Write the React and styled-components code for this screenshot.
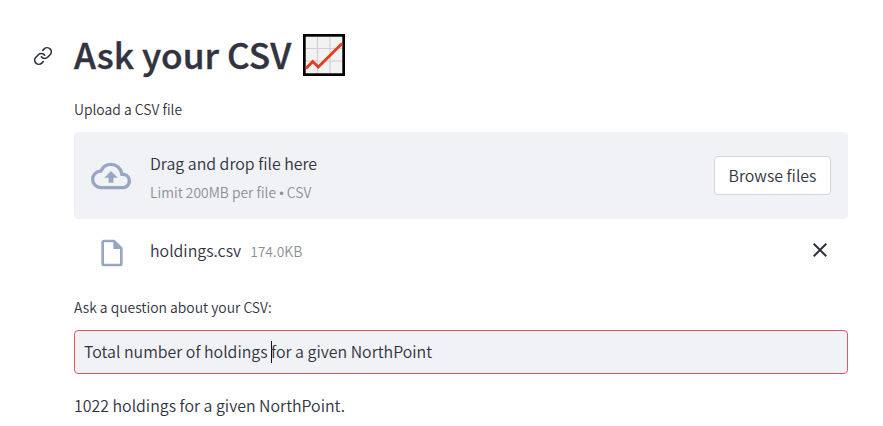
import React from "react";
import styled, { createGlobalStyle } from "styled-components";

const GlobalStyle = createGlobalStyle`
  * { box-sizing: border-box; }
  body {
    margin: 0;
    background: #ffffff;
    color: #31333f;
    font-family: "Source Sans Pro", "Noto Sans CJK SC", sans-serif;
    font-size: 15.92px;
    font-weight: 350;
  }
`;

const Page = styled.main`
  width: 848px;
  height: 426px;
  padding: 28px 0 0 33px;
  overflow: hidden;
`;

const Heading = styled.header`
  display: flex;
  align-items: center;
  height: 56px;
`;

const AnchorLink = styled.a`
  display: flex;
  width: 41px;
  color: #31333f;
`;

const Title = styled.h1`
  display: flex;
  align-items: flex-start;
  gap: 12px;
  height: 56px;
  margin: 0;
  font-size: 35.3px;
  font-weight: 500;
  line-height: 51px;
  white-space: nowrap;
  -webkit-text-stroke: 0.4px currentColor;

  svg {
    margin-top: 6px;
  }
`;

const Content = styled.div`
  margin-left: 41px;
`;

const Label = styled.label`
  display: block;
  height: 22px;
  margin-top: ${(p) => p.$top}px;
  font-size: 13.9px;
  line-height: 22px;
`;

const Dropzone = styled.section`
  display: flex;
  align-items: center;
  height: 87px;
  margin-top: 12px;
  padding: 0 17px;
  border-radius: 4px;
  background: #f0f2f6;
`;

const IconSlot = styled.span`
  display: flex;
  flex: none;
  justify-content: center;
  width: ${(p) => p.$width}px;
  padding-top: ${(p) => p.$drop || 1}px;
  color: #97a6c3;
`;

const Instructions = styled.div`
  flex: 1;
  margin-left: 19px;
  padding-top: 6px;
`;

const Line = styled.div`
  line-height: 28px;
`;

const Hint = styled.small`
  display: block;
  margin-top: 1px;
  font-size: 13.86px;
  line-height: 26px;
  color: #8d8f98;
`;

const Bullet = styled.span`
  font-family: "Liberation Sans", sans-serif;
  font-size: 13px;
`;

const BrowseButton = styled.button`
  width: 117px;
  height: 39px;
  padding: 0;
  border: 1px solid #d6d6da;
  border-radius: 4px;
  background: #ffffff;
  color: inherit;
  font: inherit;
  line-height: 37px;
`;

const FileRow = styled.div`
  display: flex;
  align-items: center;
  height: 32px;
  margin-top: 16px;
  padding: 0 16px 0 22px;
`;

const FileName = styled.span`
  margin-left: 22px;
  line-height: 28px;
`;

const FileSize = styled.span`
  flex: 1;
  margin-left: 9px;
  font-size: 13.86px;
  line-height: 28px;
  color: #8d8f98;
`;

const RemoveButton = styled.button`
  display: flex;
  margin-top: -2px;
  padding: 0;
  border: 0;
  background: none;
  color: #31333f;
`;

const Field = styled.div`
  height: 44px;
  margin-top: 12px;
  padding-left: 9px;
  border: 1px solid #e05a62;
  border-radius: 4px;
  background: #f0f2f6;
  line-height: 42px;
  white-space: pre;
`;

const Caret = styled.span`
  display: inline-block;
  width: 1px;
  height: 22px;
  margin-right: -1px;
  vertical-align: -5px;
  background: #111111;
`;

const Answer = styled.p`
  margin: 18px 0 0;
  line-height: 28px;
`;

const LinkIcon = () => (
  <svg width="20" height="20" viewBox="0 0 24 24" fill="none" stroke="currentColor" strokeWidth="2" strokeLinecap="round" strokeLinejoin="round">
    <path d="M10 13a5 5 0 0 0 7.54.54l3-3a5 5 0 0 0-7.07-7.07l-1.72 1.71" />
    <path d="M14 11a5 5 0 0 0-7.54-.54l-3 3a5 5 0 0 0 7.07 7.07l1.71-1.71" />
  </svg>
);

const ChartIcon = () => (
  <svg width="42" height="42" viewBox="0 0 42 42">
    <rect width="42" height="42" fill="#000" />
    <rect x="2.7" y="2.7" width="36.6" height="36.6" fill="#f2f2f2" />
    <path d="M14.5 3v36M27 3v36M3 14.5h36M3 27h36" stroke="#cfcfcf" strokeWidth="1.2" />
    <path d="M3 34.5 9.7 27.5 15.3 33 39 9.5" fill="none" stroke="#e43d1c" strokeWidth="2.8" />
  </svg>
);

const CloudIcon = () => (
  <svg width="40" height="40" viewBox="0 0 24 24" fill="currentColor">
    <path d="M19.35 10.04A7.49 7.49 0 0 0 12 4C9.11 4 6.6 5.64 5.35 8.04A5.994 5.994 0 0 0 0 14c0 3.31 2.69 6 6 6h13c2.76 0 5-2.24 5-5 0-2.64-2.05-4.78-4.65-4.96zM19 18H6c-2.21 0-4-1.79-4-4 0-2.05 1.53-3.76 3.56-3.97l1.07-.11.5-.95A5.469 5.469 0 0 1 12 6c2.62 0 4.88 1.86 5.39 4.43l.3 1.5 1.53.11A2.98 2.98 0 0 1 22 15c0 1.65-1.35 3-3 3zM8 13h2.55v3h2.9v-3H16l-4-4z" />
  </svg>
);

const FileIcon = () => (
  <svg width="32" height="32" viewBox="0 0 24 24" fill="currentColor">
    <path d="M14 2H6c-1.1 0-1.99.9-1.99 2L4 20c0 1.1.89 2 1.99 2H18c1.1 0 2-.9 2-2V8l-6-6zM6 20V4h7v5h5v11H6z" />
  </svg>
);

const CloseIcon = () => (
  <svg width="24" height="24" viewBox="0 0 24 24" fill="currentColor">
    <path d="M19 6.41 17.59 5 12 10.59 6.41 5 5 6.41 10.59 12 5 17.59 6.41 19 12 13.41 17.59 19 19 17.59 13.41 12z" />
  </svg>
);

export default function App() {
  return (
    <>
      <GlobalStyle />
      <Page>
        <Heading>
          <AnchorLink><LinkIcon /></AnchorLink>
          <Title><span>Ask your CSV</span><ChartIcon /></Title>
        </Heading>
        <Content>
          <Label $top={14}>Upload a CSV file</Label>
          <Dropzone>
            <IconSlot $width={40}><CloudIcon /></IconSlot>
            <Instructions>
              <Line>Drag and drop file here</Line>
              <Hint>Limit 200MB per file <Bullet>•</Bullet> CSV</Hint>
            </Instructions>
            <BrowseButton>Browse files</BrowseButton>
          </Dropzone>
          <FileRow>
            <IconSlot $width={32} $drop={3}><FileIcon /></IconSlot>
            <FileName>holdings.csv</FileName>
            <FileSize>174.0KB</FileSize>
            <RemoveButton aria-label="Remove file"><CloseIcon /></RemoveButton>
          </FileRow>
          <Label $top={29}>Ask a question about your CSV:</Label>
          <Field>Total number of holdings <Caret />for a given NorthPoint</Field>
          <Answer>1022 holdings for a given NorthPoint.</Answer>
        </Content>
      </Page>
    </>
  );
}
